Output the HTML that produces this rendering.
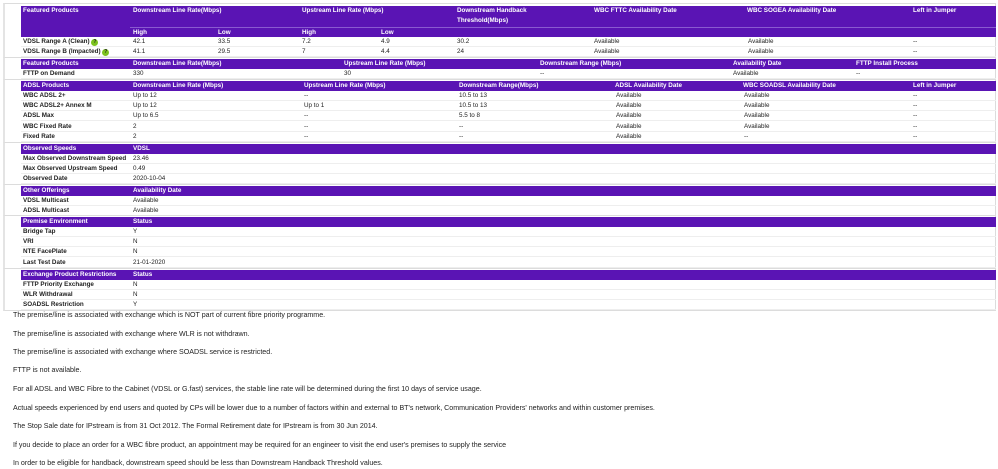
<!DOCTYPE html>
<html><head><meta charset="utf-8"><style>
*{margin:0;padding:0;box-sizing:border-box}
body{width:998px;height:469px;background:#fff;font-family:"Liberation Sans",sans-serif;color:#222;position:relative;overflow:hidden}
.sec{position:absolute;left:3px;width:993px;border:1px solid #dcdcdc;border-left:2px solid #e4e4e4;background:#fff}
.r{position:absolute;left:16px;width:975px;height:10px;font-size:6.3px;line-height:10px;border-bottom:1px solid #eee}
.h{background:#5a14b4;color:#fff;font-weight:bold;border-bottom:none}
.r span{position:absolute;top:0;white-space:nowrap}
.r span.l{font-weight:bold;color:#222}
.h span.l{color:#fff}
p{position:absolute;left:13px;font-size:7.1px;color:#222;white-space:nowrap}
.ic{display:inline-block;width:7px;height:7px;border-radius:50%;background:#7cc21e;color:#222;font-size:5px;line-height:7px;text-align:center;vertical-align:top;margin-top:1.5px;font-weight:bold;font-style:normal}
</style></head><body>

<div class="sec" style="top:3px;height:55px">
 <div class="r h" style="top:2px;height:31px">
  <span style="left:2px">Featured Products</span>
  <span style="left:112px">Downstream Line Rate(Mbps)</span>
  <span style="left:281px">Upstream Line Rate (Mbps)</span>
  <span style="left:436px">Downstream Handback</span>
  <span style="left:436px;top:10px">Threshold(Mbps)</span>
  <span style="left:573px">WBC FTTC Availability Date</span>
  <span style="left:726px">WBC SOGEA Availability Date</span>
  <span style="left:892px">Left in Jumper</span>
  <span style="left:112px;top:22px">High</span><span style="left:197px;top:22px">Low</span>
  <span style="left:281px;top:22px">High</span><span style="left:360px;top:22px">Low</span>
  <div style="position:absolute;left:109px;right:0;top:21px;height:1px;background:#8a5ad0"></div>
 </div>
 <div class="r" style="top:33px"><span class="l" style="left:2px">VDSL Range A (Clean) <i class="ic">?</i></span><span style="left:112px">42.1</span><span style="left:197px">33.5</span><span style="left:281px">7.2</span><span style="left:360px">4.9</span><span style="left:436px">30.2</span><span style="left:573px">Available</span><span style="left:727px">Available</span><span style="left:892px">--</span></div>
 <div class="r" style="top:43px"><span class="l" style="left:2px">VDSL Range B (Impacted) <i class="ic">?</i></span><span style="left:112px">41.1</span><span style="left:197px">29.5</span><span style="left:281px">7</span><span style="left:360px">4.4</span><span style="left:436px">24</span><span style="left:573px">Available</span><span style="left:727px">Available</span><span style="left:892px">--</span></div>
</div>

<div class="sec" style="top:57px;height:23px">
 <div class="r h" style="top:1px"><span style="left:2px">Featured Products</span><span style="left:112px">Downstream Line Rate(Mbps)</span><span style="left:323px">Upstream Line Rate (Mbps)</span><span style="left:519px">Downstream Range (Mbps)</span><span style="left:712px">Availability Date</span><span style="left:835px">FTTP Install Process</span></div>
 <div class="r" style="top:11px"><span class="l" style="left:2px">FTTP on Demand</span><span style="left:112px">330</span><span style="left:323px">30</span><span style="left:519px">--</span><span style="left:712px">Available</span><span style="left:835px">--</span></div>
</div>

<div class="sec" style="top:79px;height:64px">
 <div class="r h" style="top:1px"><span style="left:2px">ADSL Products</span><span style="left:112px">Downstream Line Rate (Mbps)</span><span style="left:283px">Upstream Line Rate (Mbps)</span><span style="left:438px">Downstream Range(Mbps)</span><span style="left:594px">ADSL Availability Date</span><span style="left:722px">WBC SOADSL Availability Date</span><span style="left:892px">Left in Jumper</span></div>
 <div class="r" style="top:11px"><span class="l" style="left:2px">WBC ADSL 2+</span><span style="left:112px">Up to 12</span><span style="left:283px">--</span><span style="left:438px">10.5 to 13</span><span style="left:595px">Available</span><span style="left:723px">Available</span><span style="left:892px">--</span></div>
 <div class="r" style="top:21px"><span class="l" style="left:2px">WBC ADSL2+ Annex M</span><span style="left:112px">Up to 12</span><span style="left:283px">Up to 1</span><span style="left:438px">10.5 to 13</span><span style="left:595px">Available</span><span style="left:723px">Available</span><span style="left:892px">--</span></div>
 <div class="r" style="top:31px"><span class="l" style="left:2px">ADSL Max</span><span style="left:112px">Up to 6.5</span><span style="left:283px">--</span><span style="left:438px">5.5 to 8</span><span style="left:595px">Available</span><span style="left:723px">Available</span><span style="left:892px">--</span></div>
 <div class="r" style="top:42px"><span class="l" style="left:2px">WBC Fixed Rate</span><span style="left:112px">2</span><span style="left:283px">--</span><span style="left:438px">--</span><span style="left:595px">Available</span><span style="left:723px">Available</span><span style="left:892px">--</span></div>
 <div class="r" style="top:52px"><span class="l" style="left:2px">Fixed Rate</span><span style="left:112px">2</span><span style="left:283px">--</span><span style="left:438px">--</span><span style="left:595px">Available</span><span style="left:723px">--</span><span style="left:892px">--</span></div>
</div>

<div class="sec" style="top:142px;height:43px">
 <div class="r h" style="top:1px"><span style="left:2px">Observed Speeds</span><span style="left:112px">VDSL</span></div>
 <div class="r" style="top:11px"><span class="l" style="left:2px">Max Observed Downstream Speed</span><span style="left:112px">23.46</span></div>
 <div class="r" style="top:21px"><span class="l" style="left:2px">Max Observed Upstream Speed</span><span style="left:112px">0.49</span></div>
 <div class="r" style="top:31px"><span class="l" style="left:2px">Observed Date</span><span style="left:112px">2020-10-04</span></div>
</div>

<div class="sec" style="top:184px;height:32px">
 <div class="r h" style="top:1px"><span style="left:2px">Other Offerings</span><span style="left:112px">Availability Date</span></div>
 <div class="r" style="top:11px"><span class="l" style="left:2px">VDSL Multicast</span><span style="left:112px">Available</span></div>
 <div class="r" style="top:21px"><span class="l" style="left:2px">ADSL Multicast</span><span style="left:112px">Available</span></div>
</div>

<div class="sec" style="top:215px;height:54px">
 <div class="r h" style="top:1px"><span style="left:2px">Premise Environment</span><span style="left:112px">Status</span></div>
 <div class="r" style="top:11px"><span class="l" style="left:2px">Bridge Tap</span><span style="left:112px">Y</span></div>
 <div class="r" style="top:21px"><span class="l" style="left:2px">VRI</span><span style="left:112px">N</span></div>
 <div class="r" style="top:31px"><span class="l" style="left:2px">NTE FacePlate</span><span style="left:112px">N</span></div>
 <div class="r" style="top:42px"><span class="l" style="left:2px">Last Test Date</span><span style="left:112px">21-01-2020</span></div>
</div>

<div class="sec" style="top:268px;height:43px">
 <div class="r h" style="top:1px"><span style="left:2px">Exchange Product Restrictions</span><span style="left:112px">Status</span></div>
 <div class="r" style="top:11px"><span class="l" style="left:2px">FTTP Priority Exchange</span><span style="left:112px">N</span></div>
 <div class="r" style="top:21px"><span class="l" style="left:2px">WLR Withdrawal</span><span style="left:112px">N</span></div>
 <div class="r" style="top:31px"><span class="l" style="left:2px">SOADSL Restriction</span><span style="left:112px">Y</span></div>
</div>

<p style="top:311px">The premise/line is associated with exchange which is NOT part of current fibre priority programme.</p>
<p style="top:330px">The premise/line is associated with exchange where WLR is not withdrawn.</p>
<p style="top:348px">The premise/line is associated with exchange where SOADSL service is restricted.</p>
<p style="top:366px">FTTP is not available.</p>
<p style="top:385px">For all ADSL and WBC Fibre to the Cabinet (VDSL or G.fast) services, the stable line rate will be determined during the first 10 days of service usage.</p>
<p style="top:404px">Actual speeds experienced by end users and quoted by CPs will be lower due to a number of factors within and external to BT's network, Communication Providers' networks and within customer premises.</p>
<p style="top:422px">The Stop Sale date for IPstream is from 31 Oct 2012. The Formal Retirement date for IPstream is from 30 Jun 2014.</p>
<p style="top:441px">If you decide to place an order for a WBC fibre product, an appointment may be required for an engineer to visit the end user's premises to supply the service</p>
<p style="top:459px">In order to be eligible for handback, downstream speed should be less than Downstream Handback Threshold values.</p>
</body></html>
